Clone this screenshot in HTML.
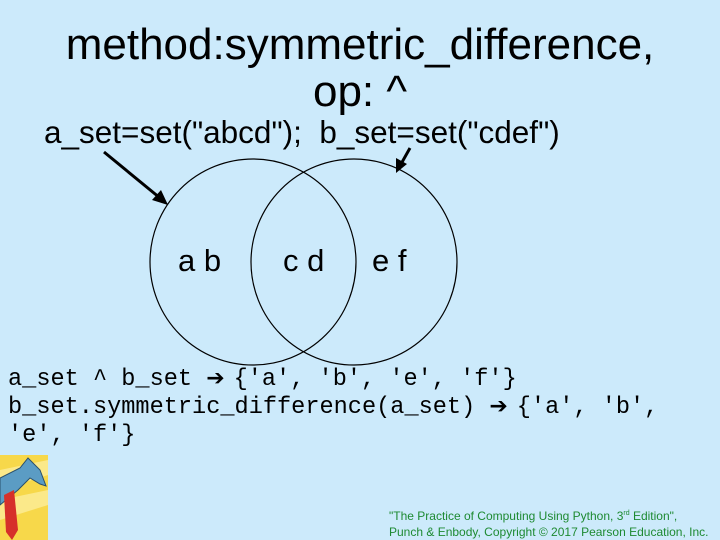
<!DOCTYPE html>
<html><head><meta charset="utf-8"><style>
html,body{margin:0;padding:0}
body{width:720px;height:540px;background:#cceafb;position:relative;overflow:hidden;font-family:"Liberation Sans",sans-serif;color:#000}
.t{position:absolute;white-space:nowrap}
.code{font-family:"Liberation Mono",monospace;font-size:23.6px;left:8px}
.ar{display:inline-block;width:0.6em;text-align:center;font-family:"DejaVu Sans",sans-serif;font-weight:bold;font-size:22px}
</style></head><body>
<div class="t" style="left:0;width:720px;text-align:center;top:21px;font-size:44px;line-height:47px">method:symmetric_difference,<br>op: ^</div>
<div class="t" style="left:44px;top:114px;font-size:31.5px">a_set=set("abcd");&nbsp; b_set=set("cdef")</div>
<svg style="position:absolute;left:0;top:0" width="720" height="540">
<circle cx="253" cy="262" r="103" fill="none" stroke="#000" stroke-width="1.2"/>
<circle cx="354" cy="262" r="103" fill="none" stroke="#000" stroke-width="1.2"/>
<line x1="104" y1="152" x2="160" y2="198" stroke="#000" stroke-width="3"/>
<polygon points="168,205 152,200 161,190" fill="#000"/>
<line x1="410" y1="148" x2="401" y2="164" stroke="#000" stroke-width="3"/>
<polygon points="396,173 396,158 407,164" fill="#000"/>
<rect x="0" y="455" width="48" height="85" fill="#f7d84a"/>
<polygon points="0,470 48,460 48,475 0,490" fill="#fbe98a"/>
<polygon points="0,500 48,490 48,505 0,520" fill="#fbe98a"/>
<path d="M0,478 L20,468 L28,458 L40,470 L46,486 L40,484 L30,478 L18,490 L6,500 L0,505Z" fill="#5b9cc4" stroke="#2a4f6b" stroke-width="1"/>
<polygon points="4,495 14,490 18,530 12,540 6,532" fill="#d6302a"/>
</svg>
<div class="t" style="left:178px;top:243px;font-size:31px">a b</div>
<div class="t" style="left:283px;top:243px;font-size:31px">c d</div>
<div class="t" style="left:372px;top:243px;font-size:31px">e f</div>
<div class="t code" style="top:366px">a_set ^ b_set <span class="ar">➔</span> {'a', 'b', 'e', 'f'}</div>
<div class="t code" style="top:394px">b_set.symmetric_difference(a_set) <span class="ar">➔</span> {'a', 'b',</div>
<div class="t code" style="top:422px">'e', 'f'}</div>
<div class="t" style="left:389px;top:506px;font-size:12px;line-height:16px;color:#1e8a32">"The Practice of Computing Using Python, 3<sup style="font-size:7px">rd</sup> Edition",<br>Punch &amp; Enbody, Copyright © 2017 Pearson Education, Inc.</div>
</body></html>
